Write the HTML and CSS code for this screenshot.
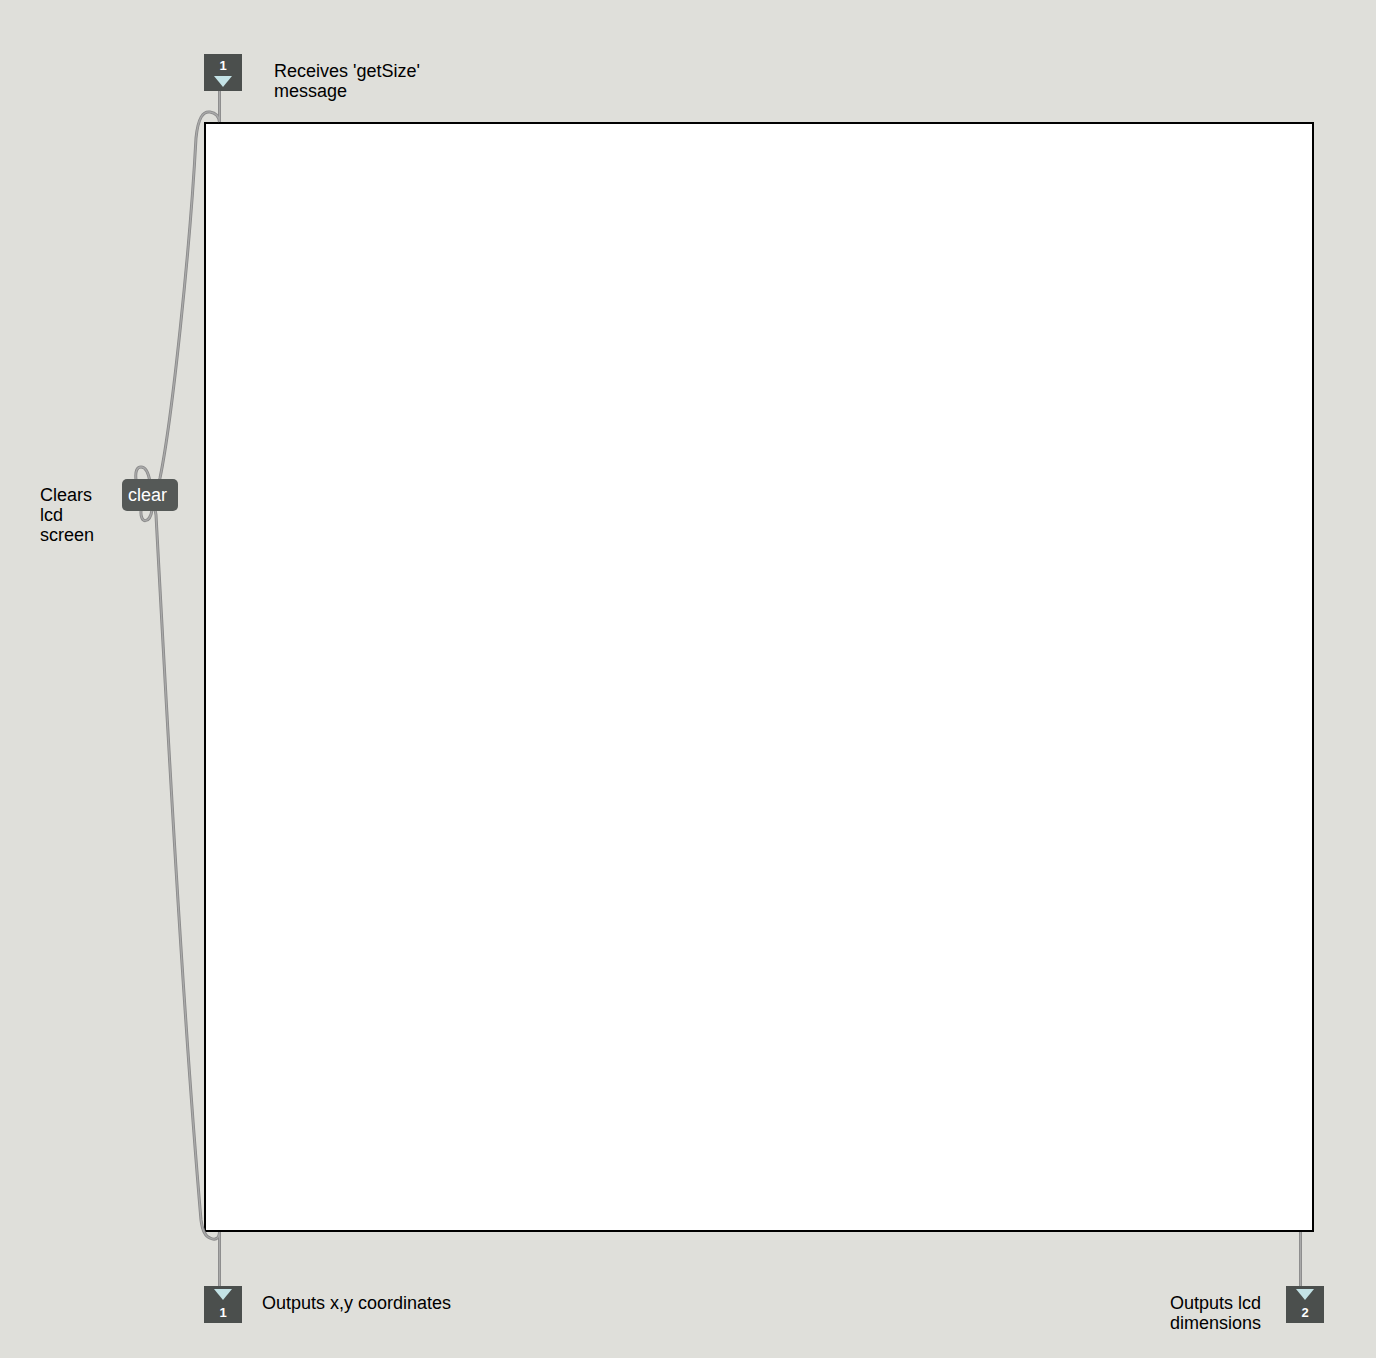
FILE: index.html
```html
<!DOCTYPE html>
<html>
<head>
<meta charset="utf-8">
<link rel="stylesheet" href="styles.css">
</head>
<body>
<div class="patcher">
  <div class="lcd"></div>

  <svg class="cords" width="1376" height="1358" viewBox="0 0 1376 1358">
    <g class="cord">
      <path d="M219.5 91 L219.5 122"/>
      <path d="M219.5 1232 L219.5 1286"/>
      <path d="M1300.5 1232 L1300.5 1286"/>
      <path d="M141 511 C140 524 150 524 152 510 L160 478 C172 420 190 250 196 138 C198 118 203 111 210 112 C216 113 219 117 219.5 122"/>
      <path d="M219.5 1232 C219 1240 214 1240 210 1238 C204 1236 202 1228 201 1220 C182 1000 166 700 156 515 L150 482 C148 470 144 467 141 467 C137 467 135 471 136 480"/>
    </g>
    <g class="cord-inner">
      <path d="M219.5 91 L219.5 122"/>
      <path d="M219.5 1232 L219.5 1286"/>
      <path d="M1300.5 1232 L1300.5 1286"/>
      <path d="M141 511 C140 524 150 524 152 510 L160 478 C172 420 190 250 196 138 C198 118 203 111 210 112 C216 113 219 117 219.5 122"/>
      <path d="M219.5 1232 C219 1240 214 1240 210 1238 C204 1236 202 1228 201 1220 C182 1000 166 700 156 515 L150 482 C148 470 144 467 141 467 C137 467 135 471 136 480"/>
    </g>
  </svg>

  <div class="port inlet inlet-1">
    <span class="num">1</span>
    <span class="tri"></span>
  </div>
  <div class="comment c-receives">Receives 'getSize'<br>message</div>

  <div class="comment c-clears">Clears<br>lcd<br>screen</div>
  <div class="msg clear">clear</div>

  <div class="port outlet outlet-1">
    <span class="tri"></span>
    <span class="num">1</span>
  </div>
  <div class="comment c-outxy">Outputs x,y coordinates</div>

  <div class="comment c-outdim">Outputs lcd<br>dimensions</div>
  <div class="port outlet outlet-2">
    <span class="tri"></span>
    <span class="num">2</span>
  </div>
</div>
</body>
</html>
```

FILE: styles.css
```css
html, body {
  margin: 0;
  padding: 0;
  background: #dfdfda;
}

.patcher {
  position: relative;
  width: 1376px;
  height: 1358px;
  overflow: hidden;
  background: #dfdfda;
  font-family: "Liberation Sans", Arial, sans-serif;
  color: #000;
}

.lcd {
  position: absolute;
  left: 204px;
  top: 122px;
  width: 1106px;
  height: 1106px;
  background: #fff;
  border: 2px solid #000;
}

.cords {
  position: absolute;
  left: 0;
  top: 0;
}

.cord path {
  fill: none;
  stroke: #8a8a8a;
  stroke-width: 3;
  stroke-linecap: butt;
}

.cord-inner path {
  fill: none;
  stroke: #a9a9a9;
  stroke-width: 1.3;
}

.comment {
  position: absolute;
  font-size: 18px;
  line-height: 20px;
  white-space: nowrap;
}

.c-receives { left: 274px; top: 61px; }
.c-clears { left: 40px; top: 485px; }
.c-outxy { left: 262px; top: 1293px; }
.c-outdim { left: 1170px; top: 1293px; }

.msg {
  position: absolute;
  box-sizing: border-box;
  background: #555957;
  color: #fff;
  border-radius: 5px;
  font-size: 18px;
  line-height: 32px;
  padding-left: 6px;
}

.clear {
  left: 122px;
  top: 479px;
  width: 56px;
  height: 32px;
}

.port {
  position: absolute;
  width: 38px;
  height: 37px;
  background: #4b4f4d;
  display: flex;
  flex-direction: column;
  align-items: center;
}

.inlet-1 { left: 204px; top: 54px; }
.outlet-1 { left: 204px; top: 1286px; }
.outlet-2 { left: 1286px; top: 1286px; }

.num {
  display: block;
  color: #fff;
  font-weight: bold;
  font-size: 13px;
  line-height: 13px;
  height: 13px;
}

.tri {
  display: block;
  width: 0;
  height: 0;
  border-left: 9px solid transparent;
  border-right: 9px solid transparent;
}

.inlet .num { margin-top: 5px; }
.inlet .tri {
  margin-top: 4px;
  border-top: 11px solid #c4e3e6;
}

.outlet .tri {
  margin-top: 3px;
  border-top: 11px solid #c4e3e6;
}
.outlet .num { margin-top: 6px; }
```
